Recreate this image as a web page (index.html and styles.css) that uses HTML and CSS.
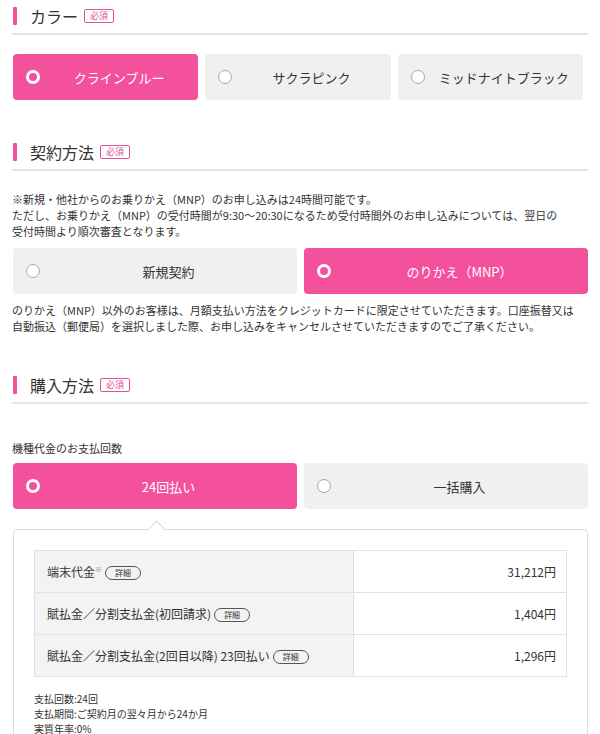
FILE: index.html
```html
<!DOCTYPE html>
<html lang="ja">
<head>
    <meta charset="UTF-8">
    <title>お申し込み</title>
    <link rel="stylesheet" href="styles.css">
</head>
<body>
    <div class="page">
        <h2 class="sec-title"><span class="bar"></span>カラー<span class="req">必須</span></h2>
        <div class="choices three">
            <div class="choice on"><span class="radio"></span><span class="label">クラインブルー</span></div>
            <div class="choice"><span class="radio"></span><span class="label">サクラピンク</span></div>
            <div class="choice"><span class="radio"></span><span class="label">ミッドナイトブラック</span></div>
        </div>

        <h2 class="sec-title gap"><span class="bar"></span>契約方法<span class="req">必須</span></h2>
        <p class="note first">※新規・他社からのお乗りかえ（MNP）のお申し込みは24時間可能です。<br>ただし、お乗りかえ（MNP）の受付時間が9:30〜20:30になるため受付時間外のお申し込みについては、翌日の<br>受付時間より順次審査となります。</p>
        <div class="choices two tight">
            <div class="choice"><span class="radio"></span><span class="label">新規契約</span></div>
            <div class="choice on"><span class="radio"></span><span class="label">のりかえ（MNP）</span></div>
        </div>
        <p class="note after">のりかえ（MNP）以外のお客様は、月額支払い方法をクレジットカードに限定させていただきます。口座振替又は<br>自動振込（郵便局）を選択しました際、お申し込みをキャンセルさせていただきますのでご了承ください。</p>

        <h2 class="sec-title gap2"><span class="bar"></span>購入方法<span class="req">必須</span></h2>
        <p class="note sub">機種代金のお支払回数</p>
        <div class="choices two small">
            <div class="choice on"><span class="radio"></span><span class="label">24回払い</span></div>
            <div class="choice"><span class="radio"></span><span class="label">一括購入</span></div>
        </div>

        <div class="detail-box">
            <table class="price">
                <tr>
                    <th>端末代金<sup>※</sup><span class="pill">詳細</span></th>
                    <td>31,212円</td>
                </tr>
                <tr>
                    <th>賦払金／分割支払金(初回請求)<span class="pill">詳細</span></th>
                    <td>1,404円</td>
                </tr>
                <tr>
                    <th>賦払金／分割支払金(2回目以降) 23回払い<span class="pill">詳細</span></th>
                    <td>1,296円</td>
                </tr>
            </table>
            <p class="note terms">支払回数:24回<br>支払期間:ご契約月の翌々月から24か月<br>実質年率:0%</p>
        </div>
    </div>
</body>
</html>
```

FILE: styles.css
```css
body {
    margin: 0;
    font-family: "Noto Sans CJK JP", "Noto Sans", sans-serif;
    color: #333;
    background: #fff;
    overflow: hidden;
}
.page {
    padding: 0 12px;
}
.sec-title {
    display: flex;
    align-items: center;
    margin: 0;
    padding: 4px 0 5px;
    font-size: 16px;
    font-weight: normal;
    line-height: 24px;
    border-bottom: 2px solid #e4e4e4;
}
.sec-title.gap { margin-top: 36px; }
.sec-title.gap2 { margin-top: 35px; }
.bar {
    width: 4px;
    height: 18px;
    margin: 0 13px 0 1px;
    background: #f4519d;
    border-radius: 1px;
}
.req {
    margin-left: 6px;
    padding: 0 5px;
    border: 1px solid #e0529a;
    border-radius: 2px;
    color: #e0529a;
    font-size: 9px;
    line-height: 12px;
}
.choices {
    display: grid;
    gap: 7px;
    margin: 19px 5px 0 1px;
}
.choices.three { grid-template-columns: repeat(3, 1fr); }
.choices.two { grid-template-columns: 1fr 1fr; margin-right: 0; }
.choices.tight { margin-top: 9px; }
.choices.small { margin-top: 7px; }
.choice {
    display: flex;
    align-items: center;
    height: 46px;
    padding-left: 13px;
    background: #f0f0f0;
    border-radius: 4px;
    font-size: 13px;
}
.choice .label {
    flex: 1;
    text-align: center;
}
.radio {
    width: 14px;
    height: 14px;
    box-sizing: border-box;
    border: 1.5px solid #a8a8a8;
    border-radius: 50%;
    background: #fff;
}
.choice.on {
    background: #f4519d;
    color: #fff;
}
.choice.on .radio {
    border: 3px solid #fff;
    background: transparent;
}
.note {
    margin: 0;
    font-size: 11px;
    line-height: 16px;
}
.note.first { margin-top: 20px; }
.note.after { margin-top: 8px; }
.note.sub { margin-top: 36px; }
.detail-box {
    position: relative;
    margin: 20px 0 0 1px;
    padding: 20px 20px 20px 20px;
    border: 1px solid #dcdcdc;
    border-radius: 4px;
}
.detail-box::before {
    content: "";
    position: absolute;
    top: -7px;
    left: 136px;
    width: 12px;
    height: 12px;
    background: #fff;
    border-top: 1px solid #dcdcdc;
    border-left: 1px solid #dcdcdc;
    transform: rotate(45deg);
}
.price {
    width: 100%;
    border-collapse: collapse;
    border: 1px solid #e2e2e2;
    font-size: 12px;
}
.price th,
.price td {
    height: 41px;
    padding: 0 10px 0 12px;
    border-bottom: 1px solid #e2e2e2;
    font-weight: normal;
}
.price th {
    width: 296px;
    text-align: left;
    background: #f3f3f3;
    border-right: 1px solid #e2e2e2;
}
.price td {
    text-align: right;
}
.price sup {
    font-size: 7px;
    color: #888;
    vertical-align: 5px;
}
.pill {
    display: inline-block;
    margin-left: 3px;
    padding: 0 9px;
    border: 1px solid #555;
    border-radius: 8px;
    font-size: 8px;
    line-height: 12px;
    vertical-align: 1px;
}
.note.terms {
    margin-top: 14px;
    font-size: 10px;
    line-height: 15px;
}
```
